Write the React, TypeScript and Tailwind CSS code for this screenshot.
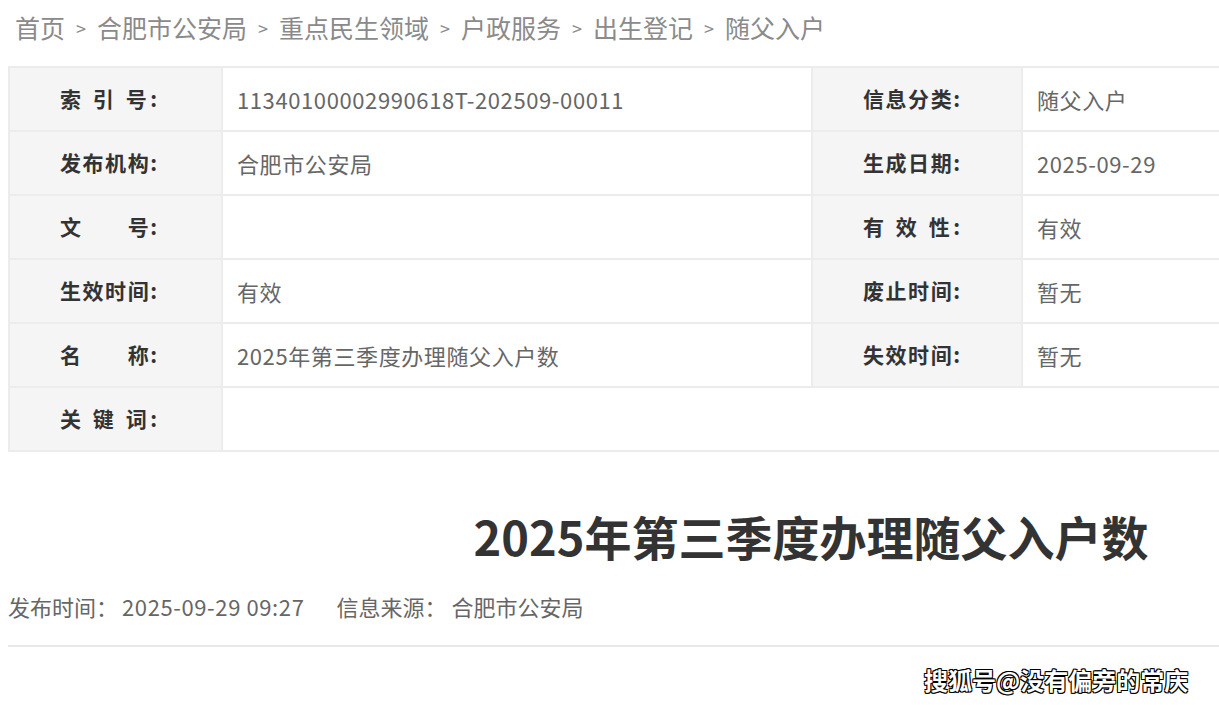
import React from "react";

const font = "font-['Microsoft_YaHei','Noto_Sans_CJK_SC','Noto_Sans',sans-serif]";

function Label({ text }: { text: string }) {
  return (
    <div className="flex h-full items-center bg-[#f5f5f5] pl-[50px]">
      <span className="inline-block w-[97px] text-[21px] font-bold text-[#333] [text-align-last:justify] whitespace-nowrap">
        {text}
      </span>
    </div>
  );
}

function Value({ text }: { text: string }) {
  return (
    <div className="flex h-full items-center pl-[14px] text-[22px] tracking-[0.6px] text-[#666]">
      {text}
    </div>
  );
}

function Sep() {
  return <span className="mx-[11px] text-[18px]">&gt;</span>;
}

export default function App() {
  const cell = "border-r-2 border-b-2 border-[#ececec] h-[64px]";
  const rows: [string, string, string, string][] = [
    ["索 引 号:", "11340100002990618T-202509-00011", "信息分类:", "随父入户"],
    ["发布机构:", "合肥市公安局", "生成日期:", "2025-09-29"],
    ["文　　号:", "", "有 效 性:", "有效"],
    ["生效时间:", "有效", "废止时间:", "暂无"],
    ["名　　称:", "2025年第三季度办理随父入户数", "失效时间:", "暂无"],
  ];
  return (
    <div className={`relative h-[705px] w-[1219px] overflow-hidden bg-white ${font}`}>
      <div className="w-[1604px] pl-[8px]">
        <div className="flex h-[56px] items-center pl-[7px] text-[25px] text-[#8a8a8a] whitespace-nowrap">
          <span>首页</span>
          <Sep />
          <span>合肥市公安局</span>
          <Sep />
          <span>重点民生领域</span>
          <Sep />
          <span>户政服务</span>
          <Sep />
          <span>出生登记</span>
          <Sep />
          <span>随父入户</span>
        </div>
        <div className="mt-[10px] grid w-[1604px] grid-cols-[213px_590px_210px_591px] border-t-2 border-l-2 border-[#ececec]">
          {rows.map((r, i) => (
            <React.Fragment key={i}>
              <div className={cell}><Label text={r[0]} /></div>
              <div className={cell}><Value text={r[1]} /></div>
              <div className={cell}><Label text={r[2]} /></div>
              <div className={cell}><Value text={r[3]} /></div>
            </React.Fragment>
          ))}
          <div className={cell}><Label text="关 键 词:" /></div>
          <div className={`${cell} col-span-3`}></div>
        </div>
        <div className="mt-[52px] pl-[10px] text-center text-[47px] font-bold leading-[64px] text-[#333]">
          2025年第三季度办理随父入户数
        </div>
        <div className="mt-[22px] flex items-center text-[22px] text-[#666] whitespace-nowrap">
          <span>发布时间：</span>
          <span className="ml-[4px] tracking-[0.6px]">2025-09-29 09:27</span>
          <span className="ml-[32px]">信息来源：</span>
          <span className="ml-[5px]">合肥市公安局</span>
        </div>
        <div className="mt-[22px] h-[2px] w-full bg-[#e8e8e8]"></div>
      </div>
      <div className="absolute left-[924px] top-[662px] text-[24px] font-bold text-white whitespace-nowrap [text-shadow:1px_1px_0_#000,-1px_-1px_0_#000,1px_-1px_0_#000,-1px_1px_0_#000,0_1px_0_#000,0_-1px_0_#000]">
        搜狐号@没有偏旁的常庆
      </div>
    </div>
  );
}
